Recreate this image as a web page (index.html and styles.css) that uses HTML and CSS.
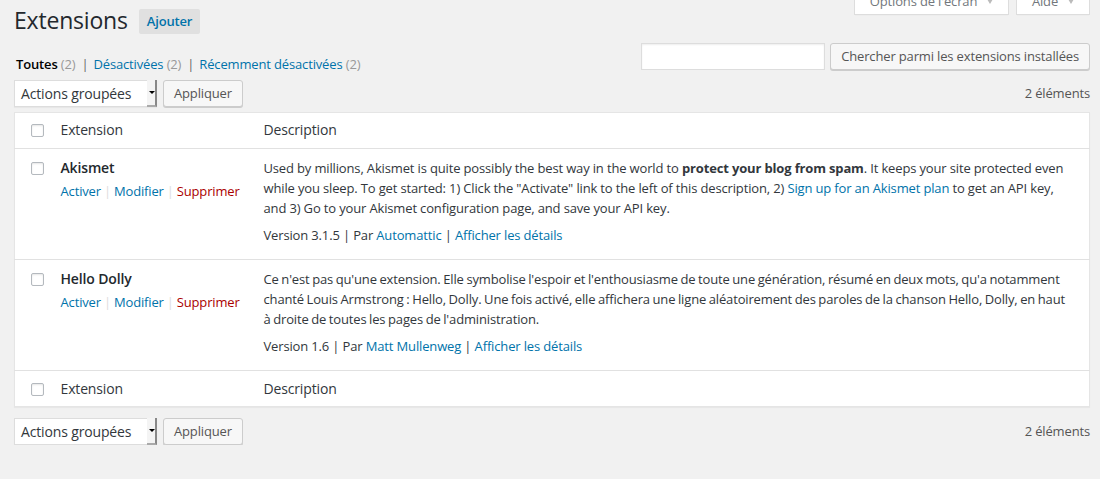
FILE: index.html
```html
<!DOCTYPE html>
<html lang="fr">
<head>
<meta charset="utf-8">
<title>Extensions</title>
<link rel="stylesheet" href="styles.css">
</head>
<body>
<div class="wrap">
  <div class="top">
    <h1 class="title">Extensions</h1>
    <a class="add-btn" href="#">Ajouter</a>
    <div class="meta-links">
      <span class="meta-tab">Options de l'écran <span class="tri"></span></span>
      <span class="meta-tab">Aide <span class="tri"></span></span>
    </div>
  </div>

  <div class="filter-row">
    <ul class="subsubsub">
      <li><a class="current" href="#">Toutes <span class="count">(2)</span></a><span class="sep">|</span></li>
      <li><a href="#">Désactivées <span class="count">(2)</span></a><span class="sep">|</span></li>
      <li><a href="#">Récemment désactivées <span class="count">(2)</span></a></li>
    </ul>
    <div class="search-box">
      <span class="search-input"></span>
      <span class="btn">Chercher parmi les extensions installées</span>
    </div>
  </div>

  <div class="tablenav">
    <div class="actions">
      <div class="fake-select"><span class="sel-text">Actions groupées</span><span class="sel-arrow"></span></div>
      <span class="btn">Appliquer</span>
    </div>
    <span class="num-items">2 éléments</span>
  </div>

  <table class="plugins">
    <colgroup><col class="c-cb"><col class="c-name"><col class="c-desc"></colgroup>
    <thead>
      <tr><th class="cb"><span class="checkbox"></span></th><th>Extension</th><th>Description</th></tr>
    </thead>
    <tbody>
      <tr>
        <td class="cb"><span class="checkbox"></span></td>
        <td class="name">
          <strong>Akismet</strong>
          <div class="row-actions"><a href="#">Activer</a><span class="rsep">|</span><a href="#">Modifier</a><span class="rsep">|</span><a class="delete" href="#">Supprimer</a></div>
        </td>
        <td class="desc">
          <p>Used by millions, Akismet is quite possibly the best way in the world to <strong>protect your blog from spam</strong>. It keeps your site protected even while you sleep. To get started: 1) Click the "Activate" link to the left of this description, 2) <a href="#">Sign up for an Akismet plan</a> to get an API key, and 3) Go to your Akismet configuration page, and save your API key.</p>
          <div class="version">Version 3.1.5 | Par <a href="#">Automattic</a> | <a href="#">Afficher les détails</a></div>
        </td>
      </tr>
      <tr>
        <td class="cb"><span class="checkbox"></span></td>
        <td class="name">
          <strong>Hello Dolly</strong>
          <div class="row-actions"><a href="#">Activer</a><span class="rsep">|</span><a href="#">Modifier</a><span class="rsep">|</span><a class="delete" href="#">Supprimer</a></div>
        </td>
        <td class="desc">
          <p class="tight">Ce n'est pas qu'une extension. Elle symbolise l'espoir et l'enthousiasme de toute une génération, résumé en deux mots, qu'a notamment chanté Louis Armstrong : Hello, Dolly. Une fois activé, elle affichera une ligne aléatoirement des paroles de la chanson Hello, Dolly, en haut à&nbsp;droite de toutes les pages de l'administration.</p>
          <div class="version">Version 1.6 | Par <a href="#">Matt Mullenweg</a> | <a href="#">Afficher les détails</a></div>
        </td>
      </tr>
    </tbody>
    <tfoot>
      <tr><th class="cb"><span class="checkbox"></span></th><th>Extension</th><th>Description</th></tr>
    </tfoot>
  </table>

  <div class="tablenav bottom">
    <div class="actions">
      <div class="fake-select"><span class="sel-text">Actions groupées</span><span class="sel-arrow"></span></div>
      <span class="btn">Appliquer</span>
    </div>
    <span class="num-items">2 éléments</span>
  </div>
</div>
</body>
</html>
```

FILE: styles.css
```css
* { box-sizing: border-box; }
html, body { margin: 0; padding: 0; }
body {
  background: #f1f1f1;
  color: #444;
  font-family: "Open Sans", "Liberation Sans", sans-serif;
  font-size: 13px;
  line-height: 1.4;
  letter-spacing: -0.15px;
  overflow: hidden;
}
a { color: #0073aa; text-decoration: none; }

.wrap { padding: 0 10px 0 14px; }

.top {
  display: flex;
  align-items: flex-start;
  height: 43px;
}
.title {
  margin: 0;
  padding-top: 6px;
  font-size: 23px;
  line-height: 29px;
  font-weight: 400;
  letter-spacing: -0.2px;
  color: #23282d;
}
.add-btn {
  margin: 9px 0 0 11px;
  height: 25px;
  padding: 0 8px;
  background: #e0e0e0;
  border-radius: 2px;
  font-weight: 600;
  font-size: 13px;
  line-height: 25px;
  color: #0073aa;
}
.meta-links {
  margin-left: auto;
  display: flex;
  gap: 7px;
  margin-top: -11px;
}
.meta-tab {
  display: flex;
  align-items: center;
  justify-content: center;
  gap: 10px;
  height: 26px;
  background: #fff;
  border: 1px solid #ddd;
  border-top: none;
  box-shadow: 0 1px 1px -1px rgba(0,0,0,.1);
  color: #72777c;
  font-size: 13px;
  white-space: nowrap;
}
.meta-tab:first-child { width: 155px; }
.meta-tab:last-child { width: 74px; }
.tri {
  width: 0; height: 0;
  border-left: 3px solid transparent;
  border-right: 3px solid transparent;
  border-top: 5px solid #bbb;
}

.filter-row {
  display: flex;
  justify-content: space-between;
  align-items: flex-start;
  height: 27px;
}
.subsubsub {
  list-style: none;
  margin: 8px 0 0 2px;
  padding: 0;
  display: flex;
  line-height: 26px;
  font-size: 13px;
  color: #666;
}
.subsubsub a { color: #0073aa; }
.subsubsub a.current { color: #000; font-weight: 600; }
.count { color: #999; font-weight: 400; }
.sep { color: #666; margin: 0 5px 0 6px; }

.search-box { display: flex; gap: 5px; }
.search-input {
  width: 184px;
  height: 27px;
  background: #fff;
  border: 1px solid #ddd;
  box-shadow: inset 0 1px 2px rgba(0,0,0,.07);
}
.btn {
  display: inline-block;
  height: 27px;
  padding: 0 10px;
  line-height: 25px;
  font-size: 13px;
  color: #555;
  background: #f7f7f7;
  border: 1px solid #ccc;
  border-radius: 3px;
  box-shadow: 0 1px 0 #ccc;
  white-space: nowrap;
}

.tablenav {
  display: flex;
  justify-content: space-between;
  align-items: center;
  margin-top: 10px;
  height: 27px;
}
.actions { display: flex; align-items: center; gap: 6px; }
.fake-select {
  display: flex;
  width: 143px;
  height: 27px;
  background: #fff;
  border: 1px solid #ddd;
  box-shadow: 0 1px 1px rgba(0,0,0,.04);
}
.sel-text {
  flex: 1;
  padding-left: 6px;
  font-size: 14px;
  line-height: 25px;
  color: #32373c;
  white-space: nowrap;
  overflow: hidden;
}
.sel-arrow {
  width: 10px;
  display: flex;
  align-items: center;
  justify-content: center;
  background: #f4f4f4;
  border-right: 2px solid #888;
  border-bottom: 2px solid #aaa;
  margin: -1px -1px -1px 0;
}
.sel-arrow::before {
  content: "";
  border-left: 3px solid transparent;
  border-right: 3px solid transparent;
  border-top: 3px solid #000;
  margin-left: 1px;
}
.num-items { color: #555; font-size: 13px; }

.plugins {
  width: 100%;
  margin-top: 5px;
  border-collapse: collapse;
  table-layout: fixed;
  background: #fff;
  border: 1px solid #e5e5e5;
  box-shadow: 0 1px 1px rgba(0,0,0,.04);
}
.c-cb { width: 46px; }
.c-name { width: 203px; }
.plugins th {
  text-align: left;
  font-weight: 400;
  font-size: 14px;
  color: #32373c;
  height: 36px;
  padding: 0;
  line-height: 20px;
}
.plugins thead th { border-bottom: 1px solid #e1e1e1; padding-bottom: 1px; }
.plugins tfoot th { border-top: 1px solid #e1e1e1; height: 36px; }
.plugins th.cb, .plugins td.cb { padding-left: 16px; }
.checkbox {
  display: block;
  width: 13px;
  height: 13px;
  border: 1px solid #b4b9be;
  border-radius: 2px;
  background: #fff;
  box-shadow: inset 0 1px 2px rgba(0,0,0,.1);
}
.plugins th.cb .checkbox { margin-top: 1px; }
.plugins tbody td {
  vertical-align: top;
  padding: 9px 0 0;
  border-top: 1px solid #e1e1e1;
}
.plugins tbody tr:first-child td { border-top: none; }
.plugins td.cb .checkbox { margin-top: 4px; }
.plugins td.name strong {
  display: block;
  font-weight: 600;
  font-size: 14px;
  line-height: 20px;
  color: #23282d;
}
.row-actions { margin-top: 3px; line-height: 20px; font-size: 13px; }
.rsep { color: #ddd; margin: 0 3px; }
.row-actions .delete { color: #a00; }
.plugins td.desc { padding-right: 14px; height: 111px; }
.desc p { margin: 0 0 7px; line-height: 20px; color: #32373c; }
.desc p.tight { word-spacing: -0.6px; }
.desc p strong { font-weight: 700; }
.version { line-height: 20px; color: #32373c; }

.tablenav.bottom { margin-top: 11px; }
```
